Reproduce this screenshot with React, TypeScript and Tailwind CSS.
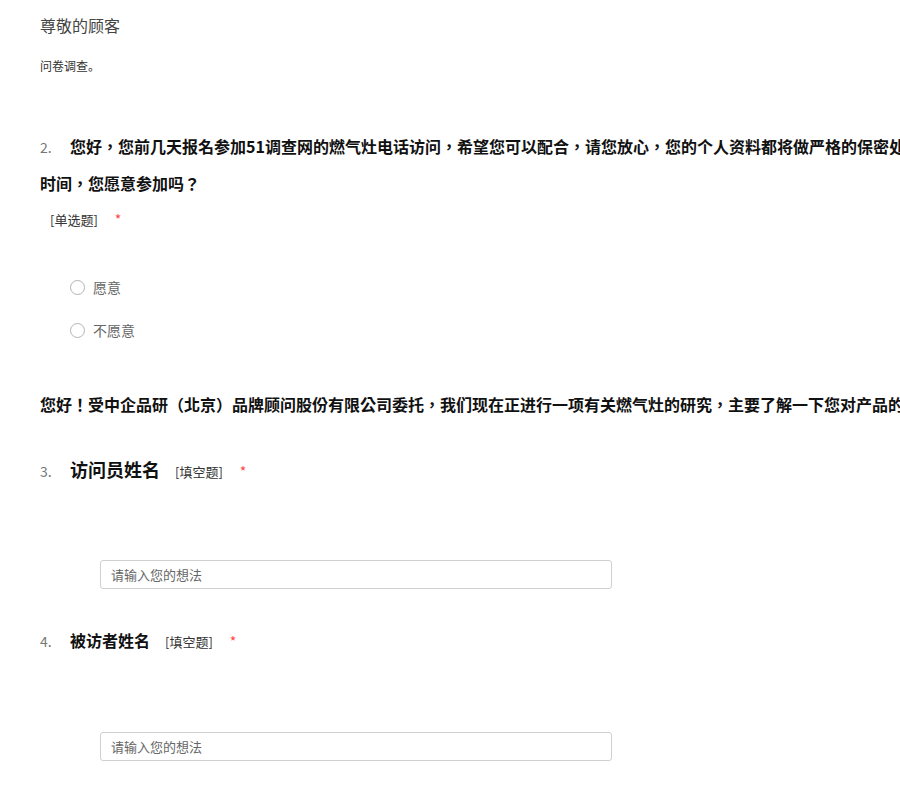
import { useState } from "react";

const font = { fontFamily: '"Noto Sans CJK SC", "Noto Sans", sans-serif' };
// centred full-width punctuation, as in the reference
const boldFont = { fontFamily: '"Noto Sans CJK TC", "Noto Sans CJK SC", sans-serif' };

function Tag({ label }: { label: string }) {
  return (
    <>
      <span className="ml-[15px] text-[13px] font-normal text-[#333]">{label}</span>
      <span className="ml-[17px] text-[14px] font-normal text-[#f44]">*</span>
    </>
  );
}

function Radio({ label, checked, onClick }: { label: string; checked: boolean; onClick: () => void }) {
  return (
    <div className="flex items-center h-[20px] ml-[30px] cursor-pointer" onClick={onClick}>
      <span className="w-[15px] h-[15px] rounded-full border border-[#b4b4b4] flex items-center justify-center">
        {checked && <span className="w-[7px] h-[7px] rounded-full bg-[#1ea0fa]" />}
      </span>
      <span className="ml-[8px] text-[14px] leading-[20px] text-[#666]">{label}</span>
    </div>
  );
}

function TextInput({ top }: { top: string }) {
  return (
    <input
      className={`block ${top} ml-[60px] w-[512px] h-[29px] border border-[#d0d0d0] rounded-[3px] pl-[10px] text-[13px] text-[#333] placeholder:text-[#666] outline-none`}
      placeholder="请输入您的想法"
      style={font}
    />
  );
}

export default function App() {
  const [choice, setChoice] = useState("");

  return (
    <div className="w-[900px] h-[800px] overflow-hidden bg-white" style={font}>
      <div className="w-[1200px] pl-[40px] pt-[15px]">
        <div className="text-[16px] leading-[20px] text-[#444]">尊敬的顾客</div>
        <div className="mt-[23px] text-[12px] leading-[16px] text-[#333]">问卷调查。</div>

        {/* Q2 */}
        <div className="mt-[54px] text-[16px] leading-[36px] font-bold text-[#111]" style={boldFont}>
          <div className="whitespace-nowrap">
            <span className="inline-block w-[30px] text-[14px] font-normal text-[#777]" style={font}>2.</span>
            您好，您前几天报名参加51调查网的燃气灶电话访问，希望您可以配合，请您放心，您的个人资料都将做严格的保密处理，访问大约需要占用您10分钟的
          </div>
          <div className="whitespace-nowrap">时间，您愿意参加吗？</div>
        </div>
        <div className="mt-[9px] pl-[10px] text-[13px] leading-[18px] text-[#333]">
          [单选题]
          <span className="ml-[17px] text-[14px] text-[#f44]">*</span>
        </div>
        <div className="mt-[48px]">
          <Radio label="愿意" checked={choice === "a"} onClick={() => setChoice("a")} />
        </div>
        <div className="mt-[23px]">
          <Radio label="不愿意" checked={choice === "b"} onClick={() => setChoice("b")} />
        </div>

        <div className="mt-[52px] text-[16px] leading-[24px] font-bold text-[#111] whitespace-nowrap" style={boldFont}>
          您好！受中企品研（北京）品牌顾问股份有限公司委托，我们现在正进行一项有关燃气灶的研究，主要了解一下您对产品的看法和意见，您的回答对我们非常重要。
        </div>

        {/* Q3 */}
        <div className="mt-[41px] flex items-baseline leading-[24px]">
          <span className="w-[30px] text-[14px] text-[#777]">3.</span>
          <span className="text-[18px] font-bold text-[#111]">访问员姓名</span>
          <Tag label="[填空题]" />
        </div>
        <TextInput top="mt-[76px]" />

        {/* Q4 */}
        <div className="mt-[39px] flex items-baseline leading-[24px]">
          <span className="w-[30px] text-[14px] text-[#777]">4.</span>
          <span className="text-[16px] font-bold text-[#111]">被访者姓名</span>
          <Tag label="[填空题]" />
        </div>
        <TextInput top="mt-[78px]" />
      </div>
    </div>
  );
}
